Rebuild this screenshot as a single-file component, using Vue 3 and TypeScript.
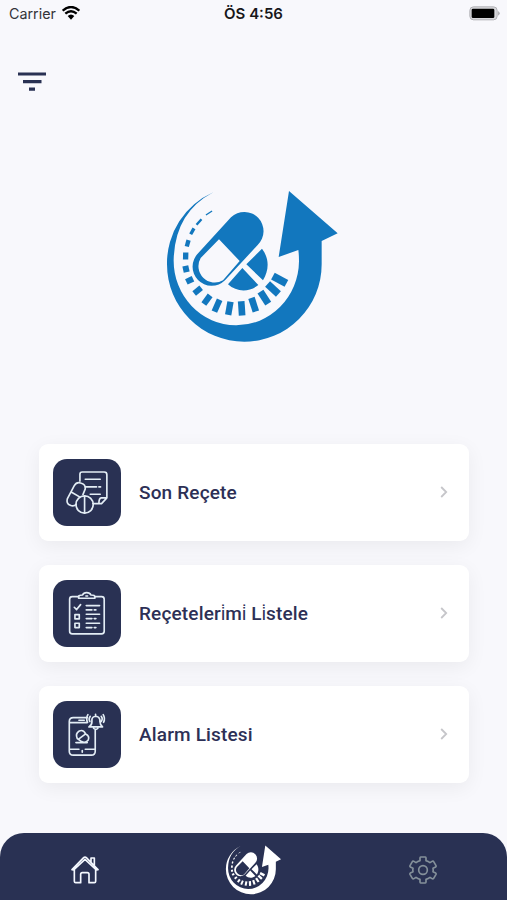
<script setup lang="ts">
import { defineComponent, h } from 'vue'

interface Tick { x: number; y: number; length: number; width: number }
interface MenuItem { id: string; label: string }

const items: MenuItem[] = [
  { id: 'prescription', label: 'Son Reçete' },
  { id: 'list', label: 'Reçeteleri\u0307mi\u0307 Li\u0307stele' },
  { id: 'alarm', label: 'Alarm Listesi' },
]

const ticks: Tick[] = [
  { x: 374, y: 299, length: 46, width: 23 },
  { x: 354, y: 327, length: 44, width: 22 },
  { x: 328, y: 353, length: 43, width: 21 },
  { x: 296, y: 374, length: 43, width: 20 },
  { x: 260, y: 385, length: 43, width: 20 },
  { x: 223, y: 385, length: 40, width: 19 },
  { x: 186, y: 377, length: 39, width: 18 },
  { x: 156, y: 359, length: 32, width: 18 },
  { x: 128, y: 332, length: 27, width: 17 },
  { x: 104, y: 301, length: 22, width: 18 },
  { x: 93, y: 267, length: 18, width: 19 },
  { x: 92, y: 228, length: 16, width: 21 },
  { x: 98, y: 190, length: 13, width: 20 },
  { x: 112, y: 154, length: 10, width: 20 },
  { x: 132, y: 126, length: 7, width: 22 },
  { x: 162, y: 99, length: 4, width: 22 },
]

const tickTransform = (t: Tick): string => {
  const angle = (Math.atan2(t.y - 232, t.x - 250) * 180) / Math.PI
  return `translate(${t.x} ${t.y}) rotate(${angle})`
}

const BrandLogo = defineComponent({
  setup: () => () =>
    h('svg', { viewBox: '0 0 585 510', fill: 'currentColor', 'aria-hidden': 'true' }, [
      h('path', {
        d: 'M175 37A232 232 0 0 0 36 253A232 232 0 0 0 500 253V183L548 160L402 33L371 231L430 210Q432 224 432 244A188 194 0 0 1 56 240Q59 98 175 37Z',
      }),
      ...ticks.map((t) =>
        h('rect', {
          x: -t.length / 2,
          y: -t.width / 2,
          width: t.length,
          height: t.width,
          transform: tickTransform(t),
        }),
      ),
      h('path', {
        'fill-rule': 'evenodd',
        d: 'M130 219L228 112A57 57 0 0 1 308 195L210 301A57 57 0 0 1 130 219ZM192 178L137 234A49 49 0 0 0 204 301L254 243Z',
      }),
      h('path', { d: 'M321 206C343 235 343 270 324 301L274 253ZM262 264L310 315C282 338 244 336 219 313Z' }),
    ]),
})
</script>

<template>
  <div class="screen">
    <header class="status">
      <div class="carrier">
        <span>Carrier</span>
        <svg class="wifi" viewBox="0 0 54 42">
          <path d="M2 14Q27-8 52 14" />
          <path d="M10 23Q27 8 44 23" />
          <path class="dot" d="M17 30Q27 21 37 30L27 41Z" />
        </svg>
      </div>
      <span class="time">ÖS 4:56</span>
      <svg class="battery" viewBox="0 0 93 45">
        <rect x="2.5" y="2.5" width="82" height="39" rx="11" />
        <path class="cap" d="M87 15Q98 22 87 29Z" />
        <rect class="charge" x="8" y="8" width="68" height="28" rx="4" />
      </svg>
    </header>

    <button class="menu" aria-label="Menü">
      <svg viewBox="0 0 28 20"><path d="M0 2H28M5 9.7H23.5M11 17.2H17" /></svg>
    </button>

    <BrandLogo class="logo" />

    <main class="cards">
      <a v-for="item in items" :key="item.id" class="card">
        <span class="tile">
          <svg v-if="item.id === 'prescription'" viewBox="25 27 203 203">
            <path d="M106 94V73Q106 66 113 66H179Q187 66 187 74V144L171 161H145M187 144H170Q163 145 163 161M122 88H167M122 111H156M163 111H168M137 133H167" />
            <path d="M89 107Q96 95 108 99Q124 103 122 117L115 134M89 107L68 147Q64 161 77 166Q87 171 95 163M81 127L105 141" />
            <circle cx="120" cy="164" r="26" />
            <path d="M120 138V190" />
          </svg>
          <svg v-else-if="item.id === 'list'" viewBox="25 27 203 203">
            <path d="M102 77H83Q75 77 75 85V181Q75 189 83 189H171Q179 189 179 181V85Q179 77 171 77H151" />
            <path d="M102 82V76Q103 72 114 72Q117 65 126 65Q136 65 139 72Q151 72 151 77V82ZM124 75H129" />
            <path d="M89 109L96 116L108 101M91 131H104V144H91ZM91 157H104V170H91Z" />
            <path d="M125 104H165M125 117H142M149 117H154M125 130H165M125 143H142M149 143H154M125 157H165M125 170H142M149 170H154" />
          </svg>
          <svg v-else viewBox="25 27 203 203">
            <path d="M128 77H86Q74 77 74 89V178Q74 190 86 190H140Q152 190 152 178V115M74 92H128M103 85H119M74 172H103M122 172H152M113 176V181" />
            <path d="M98 140Q91 125 104 117Q117 112 123 126Q136 132 131 144Q123 155 111 149ZM103 141L123 126M94 152H128" />
            <path d="M133 105H174Q166 98 166 89V83Q164 74 154 73Q143 74 142 83V90Q142 99 133 105ZM153 67V73M147 109Q154 116 160 109M137 73Q131 80 136 89M130 68Q123 79 129 91M170 73Q176 80 170 89M176 68Q183 79 177 91" />
          </svg>
        </span>
        <span class="label">{{ item.label }}</span>
        <svg class="chevron" viewBox="0 0 8 12"><path d="M1.2 1L6.2 6L1.2 11" /></svg>
      </a>
    </main>

    <nav class="tabs">
      <a class="tab">
        <svg class="home" viewBox="0 0 84 84">
          <path d="M10 41V76Q10 80 14 80H29V55Q29 50 34 50H49Q54 50 54 55V80H70Q74 80 74 76V41M3 41L38 5Q42 1 46 5L81 41L76 42L42 10L8 42ZM60 18V6H70V29" />
        </svg>
      </a>
      <a class="tab"><BrandLogo class="mini-logo" /></a>
      <a class="tab">
        <svg class="gear" viewBox="0 0 84 84">
          <path d="M35 3H49Q51 3 51 6V14Q58 16 63 20L69 16Q72 14 74 17L81 29Q82 32 80 33L72 37Q73 42 72 47L80 51Q82 53 81 55L74 67Q72 70 69 68L63 64Q58 68 51 70V78Q51 81 49 81H35Q33 81 33 78V70Q26 68 21 64L15 68Q12 70 10 67L3 55Q2 53 4 51L12 47Q11 42 12 37L4 33Q2 32 3 29L10 17Q12 14 15 16L21 20Q26 16 33 14V6Q33 3 35 3Z" />
          <circle cx="42" cy="42" r="13" />
        </svg>
      </a>
    </nav>
  </div>
</template>

<style>
body {
  background: #f8f8fc;
}
</style>

<style scoped>
.screen {
  box-sizing: border-box;
  width: 100%;
  height: 900px;
  display: flex;
  flex-direction: column;
  overflow: hidden;
  background: #f8f8fc;
  font-family: Roboto, sans-serif;
}
svg {
  display: block;
  flex: none;
}
.status {
  height: 26px;
  flex: none;
  display: grid;
  grid-template-columns: 1fr auto 1fr;
  align-items: center;
  padding: 0 7px 2px 9px;
  font-family: Inter, sans-serif;
  font-size: 14.3px;
  color: #17171a;
}
.carrier {
  display: flex;
  align-items: center;
  gap: 6px;
  color: #333338;
}
.wifi {
  width: 18px;
  height: 14px;
  margin-top: -1px;
  fill: none;
  stroke: #000;
  stroke-width: 7;
}
.wifi .dot {
  fill: #000;
  stroke: none;
}
.time {
  margin-right: 2px;
  font-weight: 600;
  font-size: 15px;
}
.battery {
  width: 31px;
  height: 15px;
  justify-self: end;
  margin-top: 1px;
  fill: #d8d8dc;
  stroke: #b2b2b6;
  stroke-width: 3;
}
.battery .cap {
  fill: #b2b2b6;
  stroke: none;
}
.battery .charge {
  fill: #000;
  stroke: none;
}
.menu {
  align-self: flex-start;
  margin: 44px 0 0 17.5px;
  padding: 0;
  border: 0;
  background: none;
}
.menu svg {
  width: 28px;
  height: 20px;
  fill: none;
  stroke: #293153;
  stroke-width: 3.2;
}
.logo {
  width: 195px;
  height: 170px;
  margin: 88px 0 0 155px;
  color: #1277be;
}
.cards {
  display: flex;
  flex-direction: column;
  gap: 24.5px;
  margin: 94px 38.5px 0;
}
.card {
  box-sizing: border-box;
  height: 96.5px;
  display: flex;
  align-items: center;
  padding: 0 20.5px 0 14.5px;
  border-radius: 9px;
  background: #fff;
  box-shadow: 0 5px 20px rgba(0, 0, 0, 0.06);
}
.tile {
  width: 67.5px;
  height: 67.5px;
  border-radius: 14px;
  background: #293153;
}
.tile svg {
  width: 67.5px;
  height: 67.5px;
  fill: none;
  stroke: #e3edf5;
  stroke-width: 5;
  stroke-linecap: round;
  stroke-linejoin: round;
}
.label {
  flex: 1;
  margin-left: 18.5px;
  font-size: 19px;
  font-weight: 500;
  letter-spacing: 0.16px;
  color: #2d3056;
}
.chevron {
  width: 8px;
  height: 12px;
  fill: none;
  stroke: #c6c6ca;
  stroke-width: 1.8;
}
.tabs {
  flex: none;
  height: 67px;
  margin-top: auto;
  display: grid;
  grid-template-columns: repeat(3, 1fr);
  border-radius: 24px 24px 0 0;
  background: #293153;
}
.tab {
  display: flex;
  justify-content: center;
  align-items: flex-start;
  color: #fff;
}
.home,
.gear {
  width: 28px;
  height: 28px;
  margin-top: 22.5px;
  fill: none;
  stroke: #f4f8ff;
  stroke-width: 5;
  stroke-linejoin: round;
}
.gear {
  stroke: #84909a;
}
.mini-logo {
  width: 63px;
  height: 55px;
  margin-top: 9px;
}
</style>
